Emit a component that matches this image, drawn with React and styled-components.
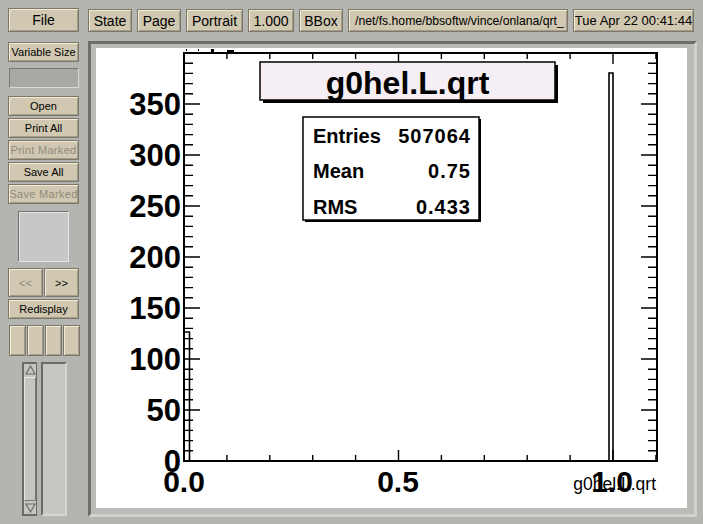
import React from 'react';
import styled, { createGlobalStyle } from 'styled-components';

const GlobalStyle = createGlobalStyle`
  html, body {
    margin: 0;
    padding: 0;
    background: #b3b5b1;
  }
  body {
    font-family: "Liberation Sans", Arial, sans-serif;
    overflow: hidden;
  }
`;

const Window = styled.div`
  width: 703px;
  height: 524px;
  box-sizing: border-box;
  padding: 8px 0 0 8px;
  display: flex;
  flex-direction: column;
`;

const TopBar = styled.div`
  display: flex;
  height: 24px;
`;

const Tools = styled.div`
  display: flex;
  gap: 5px;
  margin-left: 9px;
  padding-top: 1px;
  height: 23px;
`;

const Button = styled.div`
  box-sizing: border-box;
  flex: none;
  display: flex;
  align-items: center;
  justify-content: ${(p) => (p.$left ? 'flex-start' : 'center')};
  width: ${(p) => (p.$w ? `${p.$w}px` : '100%')};
  height: ${(p) => (p.$h ? `${p.$h}px` : '100%')};
  padding: 0 ${(p) => (p.$left ? 6 : 0)}px;
  background: #d0c8b0;
  border: 1px solid #7c776a;
  box-shadow: inset 1px 1px 0 #f3ebd3, inset -1px -1px 0 #a39c88;
  font-size: ${(p) => p.$fs || 11}px;
  color: ${(p) => (p.$off ? '#8f8a7c' : '#000')};
  letter-spacing: ${(p) => (p.$off ? '0.3px' : '0')};
  white-space: nowrap;
  overflow: hidden;
`;

const Body = styled.div`
  display: flex;
  margin-top: 9px;
`;

const LeftColumn = styled.div`
  width: 71px;
  display: flex;
  flex-direction: column;
  padding-top: 1px;
`;

const Slot = styled.div`
  margin-top: ${(p) => p.$mt || 0}px;
  margin-left: ${(p) => p.$ml || 0}px;
`;

const FileGroup = styled.div`
  display: flex;
  flex-direction: column;
  gap: 2px;
`;

const Field = styled.div`
  box-sizing: border-box;
  width: 70px;
  height: 20px;
  background: #a7a9a5;
  border: 1px solid;
  border-color: #767874 #d8dad6 #d8dad6 #767874;
`;

const Swatch = styled.div`
  box-sizing: border-box;
  width: 51px;
  height: 51px;
  background: #c7c7c7;
  border: 1px solid;
  border-color: #6f716d #e6e6e6 #e6e6e6 #6f716d;
  box-shadow: inset 1px 1px 0 #e4e4e4;
`;

const Row = styled.div`
  display: flex;
  gap: ${(p) => p.$gap || 1}px;
`;

const Scrollbar = styled.div`
  box-sizing: border-box;
  width: 15px;
  height: 154px;
  border: 2px solid;
  border-color: #6a6c68 #6a6c68 #6a6c68 #6a6c68;
  border-right-width: 1px;
  background: #c4c6c2;
  display: flex;
  flex-direction: column;
`;

const Arrow = styled.div`
  height: 12px;
  display: flex;
  align-items: center;
  justify-content: center;
`;

const Thumb = styled.div`
  flex: 1;
  margin: 1px 0;
  border: 1px solid;
  border-color: #e6e8e4 #777975 #777975 #e6e8e4;
  background: #c4c6c2;
`;

const Trough = styled.div`
  box-sizing: border-box;
  width: 26px;
  height: 154px;
  border: 2px solid;
  border-color: #6a6c68 #d4d6d2 #d4d6d2 #6a6c68;
  background: #c6c8c4;
`;

const Frame = styled.div`
  margin-left: 9px;
  width: 609px;
  height: 476px;
  box-sizing: border-box;
  border: 3px solid;
  border-color: #6c6e6a #d0d2ce #d0d2ce #6c6e6a;
  padding: 4px 7px 6px 5px;
  background: #b9bbb7;
`;

const Canvas = styled.div`
  width: 591px;
  height: 460px;
  background: #fff;
  overflow: hidden;
`;

const x0 = 184;
const xScale = 429;
const y0 = 461;
const yScale = 1.02;
const px = (u) => x0 + u * xScale;
const py = (v) => y0 - v * yScale;

const Chart = () => {
  const yTicks = [];
  for (let i = 0; i <= 40; i++) {
    const y = py(i * 10);
    const len = i % 5 === 0 ? 16 : 9;
    yTicks.push(`M${x0} ${y}h${len}M657 ${y}h${-len}`);
  }
  const xTicks = [];
  for (let j = 0; j <= 11; j++) {
    const x = px(j * 0.1);
    const len = j % 5 === 0 ? 11 : 6;
    xTicks.push(`M${x} 53v${len}M${x} ${y0}v${-len}`);
  }
  const yLabels = [0, 50, 100, 150, 200, 250, 300, 350];
  return (
    <svg width="591" height="460" viewBox="96 48 591 460">
      <g fill="#000">
        <rect x="186" y="49" width="1" height="2" />
        <rect x="198" y="49" width="1" height="2" />
        <rect x="211" y="49" width="3" height="3" />
        <rect x="227" y="50" width="7" height="2" />
      </g>
      <path d={yTicks.join('') + xTicks.join('')} stroke="#000" strokeWidth="1.4" fill="none" />
      <rect x="184" y="53" width="473" height="408" stroke="#000" strokeWidth="2" fill="none" />
      <path d="M184 461V332H189.5V461M609 461V73H613V461" stroke="#000" strokeWidth="1.6" fill="none" />

      <g fontFamily="'Liberation Sans', Arial, sans-serif" fontWeight="bold">
        {yLabels.map((v) => (
          <text key={v} x="181" y={py(v) + 11} fontSize="31" textAnchor="end">
            {v}
          </text>
        ))}
        <text x="184" y="492" fontSize="30" textAnchor="middle">0.0</text>
        <text x="398" y="492" fontSize="30" textAnchor="middle">0.5</text>
        <text x="612" y="492" fontSize="30" textAnchor="middle">1.0</text>
      </g>
      <text x="656" y="490" fontSize="17.5" textAnchor="end" fontFamily="'Liberation Sans', Arial, sans-serif">
        g0hel.L.qrt
      </text>

      <rect x="263" y="65" width="295" height="38" fill="#000" />
      <rect x="260" y="62" width="295" height="38" fill="#f5eff5" stroke="#000" strokeWidth="1.5" />
      <text x="407.5" y="94" fontSize="32" fontWeight="bold" textAnchor="middle" fontFamily="'Liberation Sans', Arial, sans-serif">
        g0hel.L.qrt
      </text>

      <rect x="305" y="119" width="176" height="103" fill="#000" />
      <rect x="303" y="117" width="176" height="103" fill="#fff" stroke="#000" strokeWidth="1.5" />
      <g fontFamily="'Liberation Sans', Arial, sans-serif" fontWeight="bold" fontSize="20">
        <text x="313" y="143">Entries</text>
        <text x="471" y="143" textAnchor="end" letterSpacing="1">507064</text>
        <text x="313" y="178">Mean</text>
        <text x="471" y="178" textAnchor="end" letterSpacing="1">0.75</text>
        <text x="313" y="214">RMS</text>
        <text x="471" y="214" textAnchor="end" letterSpacing="1">0.433</text>
      </g>
    </svg>
  );
};

const UpArrow = () => (
  <svg width="11" height="10" viewBox="0 0 11 10">
    <path d="M5.5 1L10 9H1Z" fill="none" stroke="#6a6c68" strokeWidth="1.2" />
  </svg>
);

const DownArrow = () => (
  <svg width="11" height="10" viewBox="0 0 11 10">
    <path d="M1 1H10L5.5 9Z" fill="none" stroke="#6a6c68" strokeWidth="1.2" />
  </svg>
);

const App = () => {
  return (
    <Window>
      <GlobalStyle />
      <TopBar>
        <Button $w={71} $fs={14}>File</Button>
        <Tools>
          <Button $w={44} $fs={14}>State</Button>
          <Button $w={44} $fs={14}>Page</Button>
          <Button $w={57} $fs={14}>Portrait</Button>
          <Button $w={46} $fs={14}>1.000</Button>
          <Button $w={44} $fs={14}>BBox</Button>
          <Button $w={220} $fs={12.2} $left>/net/fs.home/bbsoftw/vince/onlana/qrt_</Button>
          <Button $w={121} $fs={13}>Tue Apr 22 00:41:44</Button>
        </Tools>
      </TopBar>
      <Body>
        <LeftColumn>
          <Button $h={20} $fs={11}>Variable Size</Button>
          <Slot $mt={6} $ml={1}>
            <Field />
          </Slot>
          <Slot $mt={8}>
            <FileGroup>
              <Button $h={20}>Open</Button>
              <Button $h={20}>Print All</Button>
              <Button $h={20} $off>Print Marked</Button>
              <Button $h={20}>Save All</Button>
              <Button $h={20} $off>Save Marked</Button>
            </FileGroup>
          </Slot>
          <Slot $mt={7} $ml={10}>
            <Swatch />
          </Slot>
          <Slot $mt={6}>
            <Row $gap={1}>
              <Button $w={35} $h={29} $off>&lt;&lt;</Button>
              <Button $w={35} $h={29}>&gt;&gt;</Button>
            </Row>
          </Slot>
          <Slot $mt={2}>
            <Button $h={20}>Redisplay</Button>
          </Slot>
          <Slot $mt={6} $ml={1}>
            <Row $gap={1}>
              <Button $w={17} $h={31} />
              <Button $w={17} $h={31} />
              <Button $w={17} $h={31} />
              <Button $w={17} $h={31} />
            </Row>
          </Slot>
          <Slot $mt={6} $ml={14}>
            <Row $gap={4}>
              <Scrollbar>
                <Arrow>
                  <UpArrow />
                </Arrow>
                <Thumb />
                <Arrow>
                  <DownArrow />
                </Arrow>
              </Scrollbar>
              <Trough />
            </Row>
          </Slot>
        </LeftColumn>
        <Frame>
          <Canvas>
            <Chart />
          </Canvas>
        </Frame>
      </Body>
    </Window>
  );
};

export default App;
